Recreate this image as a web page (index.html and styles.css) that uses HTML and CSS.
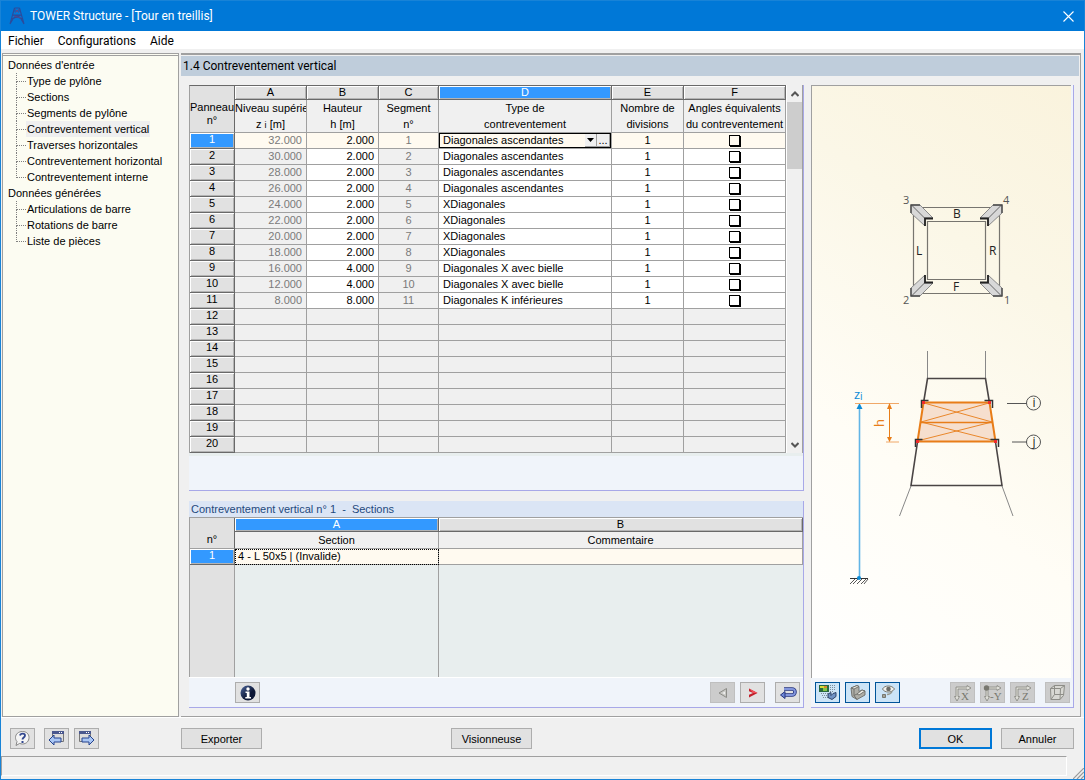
FILE: index.html
```html
<!DOCTYPE html>
<html lang="fr">
<head>
<meta charset="utf-8">
<title>TOWER Structure - [Tour en treillis]</title>
<link rel="stylesheet" href="styles.css">
</head>
<body>
<div class="window">
<header class="titlebar">
  <svg class="logo" width="16" height="18" viewBox="0 0 16 18" fill="none" stroke="#2b4b9c" stroke-width="1.1"><path d="M5.500 1L1 17M10.500 1L15 17M5.500 1h5M4.500 4h7M4 8h8M3 12l9-4M13 12L4 8M3 12l5-3 5 3M1 17l3-5M15 17l-3-5"/><path stroke="#5a4a8c" stroke-width=".8" d="M6 2l4 4M10 2L6 6M5 9l7 2"/></svg>
  <h1 class="title">TOWER Structure - [Tour en treillis]</h1>
  <button class="close" aria-label="Fermer"><svg width="11" height="11" viewBox="0 0 11 11" stroke="#fff" stroke-width="1.1"><path d="M.5.5l10 10M10.500.5l-10 10"/></svg></button>
</header>
<nav class="menubar"><button>Fichier</button><button>Configurations</button><button>Aide</button></nav>

<main class="main">
  <nav class="tree">
    <p>Données d'entrée</p>
    <ul>
      <li><a href="#">Type de pylône</a></li>
      <li><a href="#">Sections</a></li>
      <li><a href="#">Segments de pylône</a></li>
      <li><a href="#" class="current">Contreventement vertical</a></li>
      <li><a href="#">Traverses horizontales</a></li>
      <li><a href="#">Contreventement horizontal</a></li>
      <li><a href="#">Contreventement interne</a></li>
    </ul>
    <p>Données générées</p>
    <ul>
      <li><a href="#">Articulations de barre</a></li>
      <li><a href="#">Rotations de barre</a></li>
      <li><a href="#">Liste de pièces</a></li>
    </ul>
  </nav>

  <section class="work">
    <h2 class="heading">1.4 Contreventement vertical</h2>
    <div class="columns">
      <div class="grids">
        <section class="panel">
          <div class="gridrow">
          <table class="grid">
            <colgroup><col class="c-head"><col class="c-std"><col class="c-std"><col class="c-seg"><col><col class="c-std"><col class="c-ang"></colgroup>
            <thead>
              <tr class="letters"><th rowspan="2" class="corner">Panneau<br>n°</th><th>A</th><th>B</th><th>C</th><th class="on">D</th><th>E</th><th>F</th></tr>
              <tr class="names"><th>Niveau supérie<br>z <small>i</small> [m]</th><th>Hauteur<br>h [m]</th><th>Segment<br>n°</th><th>Type de<br>contreventement</th><th>Nombre de<br>divisions</th><th>Angles équivalents<br>du contreventement</th></tr>
            </thead>
            <tbody>
              <tr class="active"><th>1</th><td>32.000</td><td>2.000</td><td>1</td><td class="editing"><div class="combo"><select aria-label="Type de contreventement"><option>Diagonales ascendantes</option><option>XDiagonales</option><option>Diagonales X avec bielle</option><option>Diagonales K inférieures</option></select><span class="drop"><svg width="7" height="4" viewBox="0 0 7 4"><path d="M0 0h7L3.500 4z"/></svg></span><button class="more">...</button></div></td><td>1</td><td><input type="checkbox" aria-label="Angles équivalents 1"></td></tr>
              <tr><th>2</th><td>30.000</td><td>2.000</td><td>2</td><td>Diagonales ascendantes</td><td>1</td><td><input type="checkbox" aria-label="Angles équivalents 2"></td></tr>
              <tr><th>3</th><td>28.000</td><td>2.000</td><td>3</td><td>Diagonales ascendantes</td><td>1</td><td><input type="checkbox" aria-label="Angles équivalents 3"></td></tr>
              <tr><th>4</th><td>26.000</td><td>2.000</td><td>4</td><td>Diagonales ascendantes</td><td>1</td><td><input type="checkbox" aria-label="Angles équivalents 4"></td></tr>
              <tr><th>5</th><td>24.000</td><td>2.000</td><td>5</td><td>XDiagonales</td><td>1</td><td><input type="checkbox" aria-label="Angles équivalents 5"></td></tr>
              <tr><th>6</th><td>22.000</td><td>2.000</td><td>6</td><td>XDiagonales</td><td>1</td><td><input type="checkbox" aria-label="Angles équivalents 6"></td></tr>
              <tr><th>7</th><td>20.000</td><td>2.000</td><td>7</td><td>XDiagonales</td><td>1</td><td><input type="checkbox" aria-label="Angles équivalents 7"></td></tr>
              <tr><th>8</th><td>18.000</td><td>2.000</td><td>8</td><td>XDiagonales</td><td>1</td><td><input type="checkbox" aria-label="Angles équivalents 8"></td></tr>
              <tr><th>9</th><td>16.000</td><td>4.000</td><td>9</td><td>Diagonales X avec bielle</td><td>1</td><td><input type="checkbox" aria-label="Angles équivalents 9"></td></tr>
              <tr><th>10</th><td>12.000</td><td>4.000</td><td>10</td><td>Diagonales X avec bielle</td><td>1</td><td><input type="checkbox" aria-label="Angles équivalents 10"></td></tr>
              <tr><th>11</th><td>8.000</td><td>8.000</td><td>11</td><td>Diagonales K inférieures</td><td>1</td><td><input type="checkbox" aria-label="Angles équivalents 11"></td></tr>
              <tr class="empty"><th>12</th><td></td><td></td><td></td><td></td><td></td><td></td></tr>
              <tr class="empty"><th>13</th><td></td><td></td><td></td><td></td><td></td><td></td></tr>
              <tr class="empty"><th>14</th><td></td><td></td><td></td><td></td><td></td><td></td></tr>
              <tr class="empty"><th>15</th><td></td><td></td><td></td><td></td><td></td><td></td></tr>
              <tr class="empty"><th>16</th><td></td><td></td><td></td><td></td><td></td><td></td></tr>
              <tr class="empty"><th>17</th><td></td><td></td><td></td><td></td><td></td><td></td></tr>
              <tr class="empty"><th>18</th><td></td><td></td><td></td><td></td><td></td><td></td></tr>
              <tr class="empty"><th>19</th><td></td><td></td><td></td><td></td><td></td><td></td></tr>
              <tr class="empty"><th>20</th><td></td><td></td><td></td><td></td><td></td><td></td></tr>
            </tbody>
          </table>
          <div class="scroll">
            <button aria-label="Haut"><svg width="8" height="6" viewBox="0 0 8 6" fill="none" stroke="#555" stroke-width="2"><path d="M.5 5L4 1.500 7.500 5"/></svg></button>
            <div class="thumb"></div>
            <button aria-label="Bas"><svg width="8" height="6" viewBox="0 0 8 6" fill="none" stroke="#555" stroke-width="2"><path d="M.5 1L4 4.500 7.500 1"/></svg></button>
          </div>
          </div>
          <div class="strip"></div>
        </section>

        <section class="panel lower">
          <h3 class="caption">Contreventement vertical n° 1 &nbsp;-&nbsp; Sections</h3>
          <table class="grid sections">
            <colgroup><col class="c-head"><col class="c-sec"><col></colgroup>
            <thead>
              <tr class="letters"><th rowspan="2" class="corner">n°</th><th class="on">A</th><th>B</th></tr>
              <tr class="names one"><th>Section</th><th>Commentaire</th></tr>
            </thead>
            <tbody>
              <tr class="active"><th>1</th><td class="focus">4 - L 50x5 | (Invalide)</td><td></td></tr>
            </tbody>
          </table>
          <div class="filler"><span></span><span></span><span></span></div>
          <div class="tools">
            <button class="tool info" aria-label="Info"><svg width="16" height="16" viewBox="0 0 16 16"><defs><linearGradient id="gi" x1="0" y1="0" x2="1" y2="1"><stop offset="0" stop-color="#4d679f"/><stop offset=".6" stop-color="#0d1736"/></linearGradient></defs><circle cx="8" cy="8" r="7.500" fill="url(#gi)"/><circle cx="8" cy="4" r="1.700" fill="#fff"/><path fill="#fff" d="M5.500 6.500h4V12H11v1.500H5.300V12h1.500V8H5.500z"/></svg></button>
            <button class="tool off push" aria-label="Précédent" disabled><svg width="16" height="16" viewBox="0 0 16 16"><path d="M11.500 3.500v9L4 8z" fill="#c6c6c2" stroke="#8c8c88"/><path d="M10 6.500v3L7.200 8z" fill="#eee"/></svg></button>
            <button class="tool" aria-label="Suivant"><svg width="16" height="16" viewBox="0 0 16 16"><path d="M4 3.500L12.500 8 4 12.500z" fill="#c3202c"/><path d="M4 3.500L12.500 8H8z" fill="#f05058"/><path d="M3.500 6L8 8l-4.500 2z" fill="#e1e1e1"/></svg></button>
            <button class="tool wide" aria-label="Retour"><svg width="18" height="14" viewBox="0 0 18 14" fill="none"><path d="M5 3h8a3 3 0 0 1 0 6H6" stroke="#27357e" stroke-width="3.600"/><path d="M5 3h8a3 3 0 0 1 0 6H6" stroke="#8295dc" stroke-width="1.800"/><path d="M6 5.500v7L1.500 9z" fill="#6f87d6" stroke="#27357e"/></svg></button>
          </div>
        </section>
      </div>

      <section class="picture">
        <div class="canvas">
        <svg class="drawing" viewBox="812 86 259 591" fill="none" aria-label="Schéma du pylône">
          <g stroke="#77756f" stroke-width="1.200"><path d="M913.500 207.500h86v86h-86z"/><path d="M927.500 221.500h58v58h-58z"/></g>
          <g id="angle"><path d="M911 205h9l13 13h-8v8l-14-13z" fill="#d8d8d8" stroke="#8a8a8a"/><path d="M911.500 205l14 14" stroke="#666"/><path d="M911 213v-8h9" stroke="#4a4a4a" stroke-width="1.400"/><path d="M925 226v-7.500h8" stroke="#222" stroke-width="1.800"/></g>
          <use href="#angle" transform="matrix(-1 0 0 1 1913 0)"/>
          <use href="#angle" transform="matrix(1 0 0 -1 0 501)"/>
          <use href="#angle" transform="matrix(-1 0 0 -1 1913 501)"/>
          <g fill="#555" font-size="11"><text x="903" y="204">3</text><text x="1003" y="204">4</text><text x="903" y="304">2</text><text x="1004" y="304">1</text></g>
          <g fill="#222" font-size="12"><text x="953" y="218">B</text><text x="953" y="291">F</text><text x="916" y="255">L</text><text x="989" y="255">R</text></g>

          <g stroke="#888"><path d="M927.500 351v28M985.500 351v28M911 486l-11.500 30M1002 486l11 30"/></g>
          <path d="M923.500 403l4-24.500h58l4 24.500M917.500 442l-6.500 43.500h91l-6.500-43.500" stroke="#4a4545" stroke-width="1.600"/>
          <path d="M923.500 402.500h66l6 39h-78z" fill="#f6dfce" stroke="#e87d18" stroke-width="2"/>
          <path d="M921 422.500h71" stroke="#e87d18" stroke-width="1.400"/><path d="M924 403l68 19-75 19M989 403l-68 19 75 19" stroke="#e87d18" stroke-width=".9"/>
          <path d="M921.500 408v-7.500h7M992.500 408v-7.500h-8M915.500 447v-7.500h7M998.500 447v-7.500h-8" stroke="#333" stroke-width="1.500"/>
          <path fill="#ef2b2d" d="M922 401h3v3h-3zM988 401h3v3h-3zM916 440h3v3h-3zM994 440h3v3h-3z"/>

          <path d="M859.500 406v172" stroke="#62b5e6" stroke-width="1.600"/><path d="M859.500 403l-3 6h6z" fill="#0c8bd6"/>
          <path d="M855 403.500h44M886 442h13" stroke="#f0a868"/><path d="M889.500 406v33" stroke="#e87d18"/><path d="M889.500 403l-2.500 6h5zM889.500 442l-2.500-5h5z" fill="#e87d18"/>
          <text x="854" y="399" fill="#0c8bd6" font-size="13">z<tspan font-size="10" dy="1">i</tspan></text>
          <text transform="translate(884 427) rotate(-90)" fill="#e87d18" font-size="13">h</text>
          <path d="M850 578.500h18" stroke="#333"/><path d="M850 584l5-5M853 584l5-5M857 584l5-5M861 584l5-5M864 584l4-5" stroke="#444" stroke-width=".9"/>
          <circle cx="859" cy="578" r="2" fill="#0c8bd6"/>

          <g stroke="#555"><path d="M1007 403.500h20M1012 442h15"/><circle cx="1033.500" cy="403" r="7"/><circle cx="1033.500" cy="442" r="7"/></g>
          <g fill="#222" font-size="12" text-anchor="middle"><text x="1034" y="407">i</text><text x="1034" y="446">j</text></g>
        </svg>
        </div>
        <div class="tools right">
          <button class="tool sel" aria-label="Graphique"><svg width="19" height="17" viewBox="0 0 19 17"><path d="M1 1h10v7H1z" fill="#286840"/><path d="M2 2h4v2H2z" fill="#d8dc38"/><path d="M5 4h4v3H5z" fill="#83c648"/><path d="M6 2h3v2H6z" fill="#d8862c"/><path d="M12.500 1v8M14.500 1v7M16.500 1v6M3 9.500h8M4 11.500h7M5 13.500h5" stroke="#7c8c98" stroke-dasharray="1 1"/><path d="M10 10l3-1.500v3l2-2 3-1v4l-4 3-4-2z" fill="#6f92c4" stroke="#20365c" stroke-width=".9"/></svg></button>
          <button class="tool sel" aria-label="Profil"><svg width="17" height="17" viewBox="0 0 17 17" stroke="#6b6b66" stroke-width=".9" stroke-linejoin="round"><path d="M2 4l6-2.500 2 1v5l3-1.500 3 1v4l-8 4.500-5-3z" fill="#aeaea7"/><path d="M2 4l6-2.500 2 1L5 5zM8 10l5-4 3 1-6 4z" fill="#ecebe4"/><path d="M5 5v6.500l3 4M5 11.500l3-1.500" fill="none"/></svg></button>
          <button class="tool sel" aria-label="Affichage"><svg width="17" height="17" viewBox="0 0 17 17"><path d="M3.500 5C5.500 1 13 1 15.500 5 13 9 5.500 9 3.500 5z" fill="#f2f2ee" stroke="#77776f"/><circle cx="9.500" cy="5" r="2.300" fill="#6b6b66"/><path d="M13 7.500c-1 2-3 3-5 3" fill="none" stroke="#9a9a90" stroke-width="1.500"/><path d="M3.500 10.500h3v3h-3z" fill="#a4a49b" stroke="#77776f"/></svg></button>
          <button class="tool off push" aria-label="Vue X" disabled><svg width="19" height="18" viewBox="0 0 19 18"><use href="#axes"/><text x="8" y="16" class="axis">X</text></svg></button>
          <button class="tool off" aria-label="Vue -Y" disabled><svg width="19" height="18" viewBox="0 0 19 18"><g id="axes" fill="#deded8" stroke="#85857f" stroke-width=".8"><path d="M3 3v9.500H1.500L4 17l2.500-4.500H5V5h9v1.500l4-2.500-4-2.500V3z"/></g><circle cx="3.500" cy="4" r="2.700" fill="#77776f"/><text x="7" y="16" class="axis">-Y</text></svg></button>
          <button class="tool off" aria-label="Vue Z" disabled><svg width="19" height="18" viewBox="0 0 19 18"><use href="#axes"/><text x="9" y="16" class="axis">Z</text></svg></button>
          <button class="tool off wide" aria-label="Vue isométrique" disabled><svg width="17" height="17" viewBox="0 0 17 17" fill="#d8d8d3" stroke="#8d8d87"><path d="M1.500 4.500l4-3h10l-1 10-3.500 4h-9z"/><path d="M1.500 4.500h10l4-3M11.500 4.500l-.5 11M5.500 1.500v9h9M5.500 10.500l-3.500 5" fill="none"/></svg></button>
        </div>
      </section>
    </div>
  </section>
</main>

<footer class="footer">
  <div class="icons">
    <button class="tool" aria-label="Aide"><svg width="17" height="17" viewBox="0 0 17 17"><path d="M8.500 1.500c4 0 6.500 2.500 6.500 6s-2.500 6.500-6.500 6.500c-1 0-2-.2-2.800-.6L2 15.500l1-4C2 10.500 1.500 9 1.500 7.500c0-3.500 3-6 7-6z" fill="#f5f5f5" stroke="#888"/><path d="M6 5.500C6.500 3 11 3 11 5.500 11 7.500 8.500 7.500 8.500 9.500" fill="none" stroke="#31478f" stroke-width="1.800"/><path d="M7.500 11h2v2h-2z" fill="#31478f"/></svg></button>
    <button class="tool gap" aria-label="Module précédent"><svg width="17" height="17" viewBox="0 0 17 17"><path d="M4.500 1.500h11v10h-11z" fill="#dcdcdc" stroke="#777"/><path d="M4 1h12v3H4z" fill="#4a588e"/><path d="M11 2.500h1M13 2.500h1" stroke="#fff"/><path d="M1 10l5-5v3h7v4H6v3z" fill="#a9c6f4" stroke="#24438f"/></svg></button>
    <button class="tool" aria-label="Module suivant"><svg width="17" height="17" viewBox="0 0 17 17"><path d="M1.500 1.500h11v10h-11z" fill="#dcdcdc" stroke="#777"/><path d="M1 1h12v3H1z" fill="#4a588e"/><path d="M8 2.500h1M10 2.500h1" stroke="#fff"/><path d="M16 10l-5-5v3H4v4h7v3z" fill="#a9c6f4" stroke="#24438f"/></svg></button>
  </div>
  <button class="btn export">Exporter</button>
  <button class="btn view">Visionneuse</button>
  <button class="btn ok">OK</button>
  <button class="btn cancel">Annuler</button>
</footer>
<div class="status"><div class="field"></div><svg class="grip" width="11" height="11" viewBox="0 0 11 11" stroke="#999" stroke-width="1.200"><path d="M0 11L11 0M4 11l7-7M8 11l3-3"/></svg></div>
</div>
</body>
</html>
```
FILE: styles.css
```css
* { box-sizing: border-box; }
body { margin: 0; font: 11px/16px "Liberation Sans", Arial, sans-serif; color: #000; }
h1, h2, h3, p, ul { margin: 0; padding: 0; font-weight: normal; }
button { font: inherit; color: inherit; padding: 0; border: 0; background: none; }
svg { display: block; }

.window { display: flex; flex-direction: column; min-height: 100vh; background: #f0f0f0; border: 1px solid #1883d7; }

.titlebar { display: flex; align-items: center; height: 30px; padding: 0 10px 0 8px; background: #0078d7; color: #fff; }
.title { flex: 1; margin-left: 5px; font: 12px/16px Roboto, sans-serif; }

.menubar { display: flex; gap: 14px; height: 18px; margin-bottom: 4px; padding: 1px 0 0 7px; background: #fff; font: 12px/18px Roboto, sans-serif; }

.main { display: flex; flex: 1; gap: 2px; padding: 0 3px 0 1px; border-bottom: 1px solid #fff; }

.tree { flex: 0 0 177px; padding: 1px 0 0 5px; background: #fcfcf2; border: 1px solid #a0a0a0; border-top: 3px double #a0a0a0; }
.tree ul { list-style: none; padding-left: 8px; }
.tree li { position: relative; padding-left: 10px; height: 16px; }
.tree li::before { content: ""; position: absolute; left: 0; top: 0; width: 9px; height: 8px; border: dotted #808080; border-width: 0 0 1px 1px; }
.tree li::after { content: ""; position: absolute; left: 0; top: 8px; height: 8px; border-left: 1px dotted #808080; }
.tree li:last-child::after { display: none; }
.tree a { display: inline-block; padding: 0 1px; color: #000; text-decoration: none; }
.tree .current { background: #efefef; }

.work { flex: 1; display: flex; flex-direction: column; min-width: 0; border-top: 2px solid #a0a0a0; border-right: 1px solid #a0a0a0; border-bottom: 1px solid #a0a0a0; }
.heading { margin: 1px 1px 0 0; height: 20px; padding-left: 2px; background: #bfcddb; font: 12px/20px Roboto, sans-serif; }
.columns { flex: 1; display: flex; gap: 7px; padding: 9px 6px 8px 8px; }
.grids { flex: 1; display: flex; flex-direction: column; gap: 10px; min-width: 0; }

.panel { display: flex; flex-direction: column; background: #f0f4fa; border-right: 1px solid #a8a8e8; border-bottom: 1px solid #a8a8e8; }
.lower { flex: 1; }
.gridrow { display: flex; border-bottom: 3px solid #e8eeee; background: #f0f0f0; }
.strip { height: 34px; }

.grid { flex: 1; width: 100%; table-layout: fixed; border-collapse: separate; border-spacing: 0; border-top: 1px solid #696969; border-left: 1px solid #a0a0a0; }
.c-head { width: 45px; }
.c-std { width: 72px; }
.c-seg { width: 60px; }
.c-ang { width: 102px; }
.c-sec { width: 204px; }
.grid th, .grid td { height: 16px; padding: 0; font-weight: normal; line-height: 15px; text-align: center; white-space: nowrap; overflow: hidden; border-right: 1px solid #a0a0a0; border-bottom: 1px solid #a0a0a0; }
.grid tbody th { line-height: 13px; padding-bottom: 2px; background: #e1e1e1; border-color: #696969; box-shadow: inset 1px 1px #fff, inset -1px -1px #b4b4b4; }
.grid .letters th { height: 14px; line-height: 13px; background: #e1e1e1; border-color: #696969; box-shadow: inset 1px 1px #fff, inset -1px -1px #b4b4b4; }
.grid .names th { height: 33px; line-height: 16px; vertical-align: top; background: #f0f0f0; }
.grid .names.one th { height: 17px; }
.grid .letters .corner { vertical-align: bottom; padding-bottom: 5px; background: #e1e1e1; border-bottom-color: #a0a0a0; box-shadow: none; }
.sections .letters .corner { padding-bottom: 2px; }
.grid .letters .on, .grid .active th { background: #3399ff; color: #fff; }
.grid td { background: #fff; }
.grid td:nth-child(2), .grid td:nth-child(4) { background: #f0f0f0; color: #7a7a7a; }
.grid td:nth-child(2), .grid td:nth-child(3) { text-align: right; padding-right: 4px; }
.grid td:nth-child(5) { text-align: left; padding-left: 4px; }
.grid .empty td { background: #f0f0f0; }
.grid .active td { background: #fffaf0; }
.grid small { font-size: 9px; line-height: 9px; }

.grid .active .editing { padding: 0; }
.combo { display: flex; height: 15px; border: 1px solid #000; }
.combo select { flex: 1; min-width: 0; appearance: none; border: 0; padding: 0 0 0 3px; background: none; font: inherit; line-height: 13px; color: #000; }
.drop, .more { flex: 0 0 12px; display: grid; place-items: center; background: #f0f0f0; border: 1px solid #a0a0a0; border-width: 0 1px 1px 0; pointer-events: none; }
.more { flex-basis: 13px; line-height: 9px; pointer-events: auto; }
.grid input { appearance: none; display: block; width: 11px; height: 11px; margin: 0 auto; background: #fff; border: 1px solid #000; box-shadow: 1px 1px #000; }
.grid .active input { background: #fffaf0; }

.sections { flex: none; border-top-color: #a0a0a0; }
.grid.sections .focus { text-align: left; padding: 0 0 0 3px; color: #000; outline: 1px dotted #000; outline-offset: -1px; }

.scroll { flex: 0 0 17px; display: flex; flex-direction: column; border-left: 1px solid #fff; border-right: 1px solid #a0a0a0; }
.scroll button { height: 17px; display: grid; place-items: center; }
.scroll button:last-child { margin-top: auto; }
.thumb { height: 67px; background: #cdcdcd; }

.caption { height: 16px; padding-left: 2px; background: #dbe5f5; color: #1f497d; font-size: 11px; line-height: 16px; }
.filler { flex: 1; display: grid; grid-template-columns: 46px 204px 1fr; background: #e8eeee; border-bottom: 1px solid #fff; }
.filler span { border-right: 1px solid #a0a0a0; }
.filler span:first-child { background: #e1e1e1; border-left: 1px solid #a0a0a0; }
.filler span:last-child { border: 0; }

.tools { display: flex; gap: 5px; height: 29px; padding: 4px 3px 4px 46px; }
.tools.right { padding-left: 4px; }
.tool { flex: 0 0 25px; height: 21px; display: grid; place-items: center; background: #e1e1e1; border: 1px solid #adadad; }
.tool.off { background: #ccc; border-color: #bfbfbf; }
.tool.sel { background: #cce4f7; border-color: #005499; }
.tool.push { margin-left: auto; }
.tool.wide { margin-left: 5px; }
.axis { font: 11px "Liberation Serif", serif; fill: #77776f; }

.picture { flex: 0 0 263px; display: flex; flex-direction: column; background: #f0f4fa; border-right: 1px solid #a8a8e8; border-bottom: 1px solid #a8a8e8; }
.canvas { flex: 1; margin-right: 2px; border-top: 1px solid #a0a0a0; border-left: 1px solid #a0a0a0; background: linear-gradient(215deg, #faf3dd 0%, #fbf7e7 30%, #fffdf6 65%, #fff 100%); }
.drawing { width: 100%; height: auto; font-family: "Open Sans", "Noto Sans", sans-serif; }

.footer { display: flex; align-items: center; height: 38px; padding: 2px 10px 0 9px; }
.icons { display: flex; gap: 5px; width: 171px; }
.tool.gap { margin-left: 4px; }
.btn { height: 21px; padding-top: 1px; background: #e1e1e1; border: 1px solid #adadad; }
.export, .view { width: 81px; }
.view { margin-left: 189px; }
.ok, .cancel { width: 73px; }
.ok { margin-left: auto; border: 2px solid #0078d7; }
.cancel { margin-left: 9px; }

.status { display: flex; justify-content: space-between; align-items: flex-end; height: 23px; }
.field { flex: 1; align-self: flex-start; height: 20px; margin-right: 6px; border-top: 1px solid #a0a0a0; border-left: 1px solid #a0a0a0; border-right: 1px solid #fff; border-bottom: 1px solid #fff; }
```
